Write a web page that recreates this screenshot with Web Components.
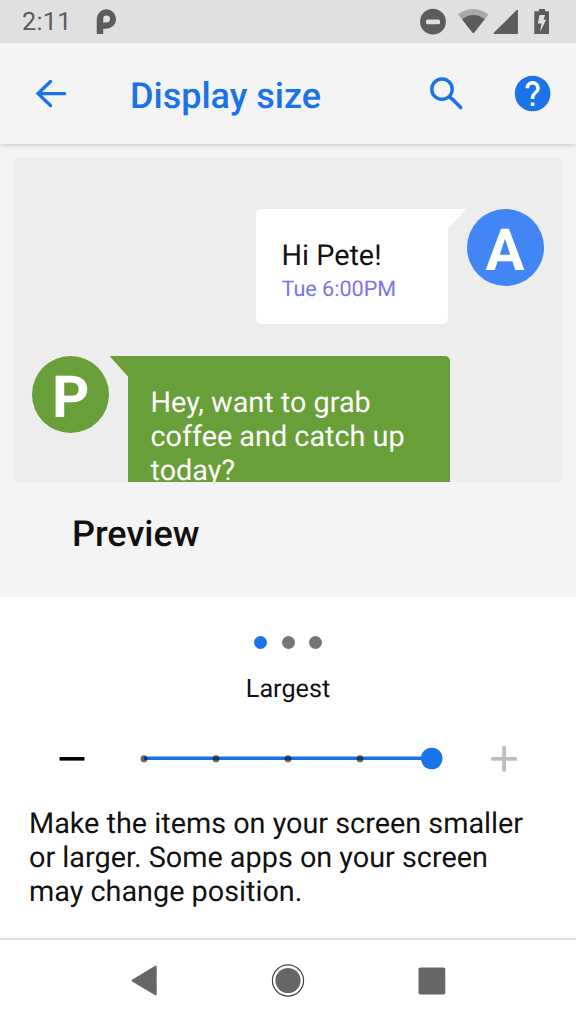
<!DOCTYPE html>
<html lang="en">
<head>
<meta charset="utf-8">
<title>Display size</title>
<style>
html,body{margin:0;height:100%;background:#fff}
body{font-family:Roboto,"Liberation Sans",sans-serif;color:#111;text-rendering:geometricPrecision}
</style>
</head>
<body>
<display-settings></display-settings>
<script>
const define = (name, html) => customElements.define(name, class extends HTMLElement {
  constructor() {
    super();
    const t = document.createElement('template');
    t.innerHTML = html;
    this.attachShadow({ mode: 'open' }).append(t.content.cloneNode(true));
  }
});

define('status-bar', `
<style>
:host{display:flex;justify-content:space-between;height:43px;background:#e0e0e0;color:#5c5c5c;position:relative;z-index:2}
.left{display:flex;padding-left:22px;gap:24px}
.time{font-size:25.2px;line-height:46px;width:50px;letter-spacing:.3px;white-space:nowrap}
svg{display:block}
</style>
<div class="left"><span class="time">2:11</span>
<svg width="24" height="43" viewBox="96 0 24 43"><path fill="#5c5c5c" fill-rule="evenodd" d="M96.700 34V19A9.700 9.700 0 1 1 106.400 28.700H103.200V34ZM103.200 22.400H106.600A3.400 3.400 0 1 0 103.200 19Z"/></svg></div>
<svg width="156" height="43" viewBox="420 0 156 43" fill="#5c5c5c">
<circle cx="433" cy="21.700" r="12.900"/><rect x="426" y="19.600" width="14" height="4.600" rx="1.500" fill="#e0e0e0"/>
<path fill="#a8a8a8" d="M458 14.500Q473 3.500 488.500 14.500L473.300 33.500Z"/>
<path d="M462 19.300Q473 10.800 484.700 19.300L474.300 32.600Q473.300 34 472.300 32.600Z"/>
<path d="M517.900 10.500V34H494.500Q493.300 33.500 494.200 32.300L516.500 10.200Q517.900 9.300 517.900 10.500Z"/>
<path fill-rule="evenodd" d="M539 9H545V11.200H549V34H534.300V11.200H539ZM539.500 15H545L543.500 19.800H546.200L540 32L541.500 23.600H537.800Z"/>
</svg>`);

define('app-bar', `
<style>
:host{display:flex;align-items:center;height:101px;background:#f4f4f4;box-shadow:0 1px 5px rgba(0,0,0,.2);position:relative;z-index:1}
svg{display:block;flex:none}
h1{margin:4px 0 0 62px;font-size:36px;font-weight:500;line-height:42px;color:#1a73e8;flex:1;white-space:nowrap}
</style>
<svg width="68" height="101" viewBox="0 43 68 101" fill="none" stroke="#1a73e8" stroke-width="3.300" stroke-linecap="round" stroke-linejoin="miter"><path d="M64.700 93.600H38M50.500 81.500L38 93.600L50.500 105.500"/></svg>
<h1><slot></slot></h1>
<svg width="150" height="101" viewBox="426 43 150 101">
<g fill="none" stroke="#1a73e8" stroke-width="3.400"><circle cx="442" cy="89.200" r="10.200"/><path d="M449.300 96.500L452 99.200"/><path stroke-linecap="round" stroke-width="3.600" d="M452 98.800L460.700 107.500"/></g>
<g transform="translate(511.200 72.100) scale(1.785)"><circle cx="12" cy="12" r="9.500" fill="#fff"/><path fill="#1a73e8" d="M12 2C6.480 2 2 6.480 2 12s4.480 10 10 10 10-4.480 10-10S17.520 2 12 2zm1 17h-2v-2h2v2zm2.070-7.750l-.9.920C13.450 12.900 13 13.500 13 15h-2v-.5c0-1.100.45-2.100 1.170-2.830l1.240-1.260c.37-.36.590-.86.590-1.410 0-1.100-.9-2-2-2s-2 .9-2 2H8c0-2.210 1.790-4 4-4s4 1.790 4 4c0 .88-.36 1.680-.93 2.250z"/></g>
</svg>`);

define('chat-avatar', `
<style>
:host{display:flex;align-items:center;justify-content:center;width:77px;height:77px;border-radius:50%;background:var(--tone);color:#fff;font-size:58px;font-weight:700;line-height:77px;flex:none}
span{transform:translateY(var(--drop,4px))}
</style><span><slot></slot></span>`);

define('chat-bubble', `
<style>
:host{display:flex}
.body{box-sizing:border-box;width:var(--w);height:var(--h);background:var(--fill);border-radius:5px;padding:var(--pad)}
.tail{width:19px;height:21px;background:var(--fill);flex:none}
:host([side=right]) .tail{margin-left:-1px;clip-path:polygon(0 0,100% 0,1px 20px,0 20px)}
:host([side=left]) .tail{margin-right:-1px;clip-path:polygon(0 0,100% 0,100% 20px,18px 20px)}
:host([side=left]){flex-direction:row-reverse}
:host([side=right]) .body{border-top-right-radius:0}
:host([side=left]) .body{border-top-left-radius:0}
</style><div class="body"><slot></slot></div><div class="tail"></div>`);

define('preview-panel', `
<style>
:host{display:block;height:453px;box-sizing:border-box;padding:14px 14px 0;background:#f4f4f4}
.canvas{height:323.500px;overflow:hidden;background:#ededed}
.row{display:flex}
.in{padding:51px 18.500px 0 242px;height:147px}
.out{padding-left:18.500px}
.in chat-bubble{--w:192px;--h:114.500px;--fill:#fff;--pad:30px 0 0 25.500px;height:114.500px}
.out chat-bubble{--w:322px;--h:180px;--fill:#689f38;--pad:30px 0 0 23px}
.in chat-avatar{--tone:#4285f4;margin-left:.6px}
.out chat-avatar{--tone:#689f38;margin-right:.300px;margin-left:-.300px}
p{margin:0;font-size:28.800px;line-height:34px;white-space:nowrap}
.hi{color:#111}
.time{font-size:21.600px;line-height:26px;color:#7b74ea;margin-top:4px}
.out p{color:#fff}
h2{margin:31px 0 0 58px;font-size:36px;line-height:42px;font-weight:500;color:#111}
</style>
<div class="canvas">
<div class="row in"><chat-bubble side="right"><p class="hi">Hi Pete!</p><p class="time">Tue 6:00PM</p></chat-bubble><chat-avatar>A</chat-avatar></div>
<div class="row out"><chat-avatar>P</chat-avatar><chat-bubble side="left"><p>Hey, want to grab<br>coffee and catch up<br>today?</p></chat-bubble></div>
</div>
<h2>Preview</h2>`);

define('page-dots', `
<style>
:host{display:flex;justify-content:center;gap:14.300px}
i{width:13px;height:13px;border-radius:50%;background:#757575}
.on{background:#1a73e8}
</style><i class="on"></i><i></i><i></i>`);

define('size-slider', `
<style>:host{display:block;height:44px}svg{display:block}</style>
<svg width="576" height="44" viewBox="0 737 576 44">
<rect x="59.500" y="757" width="25" height="3.600" fill="#000"/>
<rect x="144" y="756.500" width="288" height="3.500" fill="#1a6fe8"/>
<g fill="#222" fill-opacity=".7"><circle cx="144" cy="758.700" r="3.500"/><circle cx="216" cy="758.700" r="3.500"/><circle cx="288" cy="758.700" r="3.500"/><circle cx="360" cy="758.700" r="3.500"/></g>
<circle cx="431.700" cy="758.500" r="10.800" fill="#1a73e8"/>
<path fill="none" stroke="#bdbdbd" stroke-width="3.800" d="M491.400 758.900H516.800M504.100 746.200V771.600"/>
</svg>`);

define('size-controls', `
<style>
:host{display:block;height:341px;box-sizing:border-box;padding-top:39px;background:#fff}
.label{margin-top:26px;text-align:center;font-size:25.200px;line-height:30px}
size-slider{margin-top:32px}
p{margin:26px 0 0 29px;font-size:28.800px;line-height:34px;white-space:nowrap}
</style>
<page-dots></page-dots>
<div class="label">Largest</div>
<size-slider></size-slider>
<p>Make the items on your screen smaller<br>or larger. Some apps on your screen<br>may change position.</p>`);

define('nav-bar', `
<style>:host{display:block;height:86px;box-sizing:border-box;border-top:2px solid #dedede;background:#fff}svg{display:block}</style>
<svg width="576" height="84" viewBox="0 940 576 84" fill="#666">
<path stroke="#666" stroke-width="2" stroke-linejoin="round" d="M132.600 980.700L155.700 966.500V994.500Z"/>
<circle cx="288" cy="980.500" r="12.600"/><circle cx="288" cy="980.500" r="15.600" fill="none" stroke="#444" stroke-width="1.200"/>
<rect x="418.500" y="967.500" width="26.800" height="27" rx="1.800"/>
</svg>`);

define('display-settings', `
<style>:host{display:flex;flex-direction:column;height:1024px;overflow:hidden}</style>
<status-bar></status-bar>
<app-bar>Display size</app-bar>
<preview-panel></preview-panel>
<size-controls></size-controls>
<nav-bar></nav-bar>`);
</script>
</body>
</html>
